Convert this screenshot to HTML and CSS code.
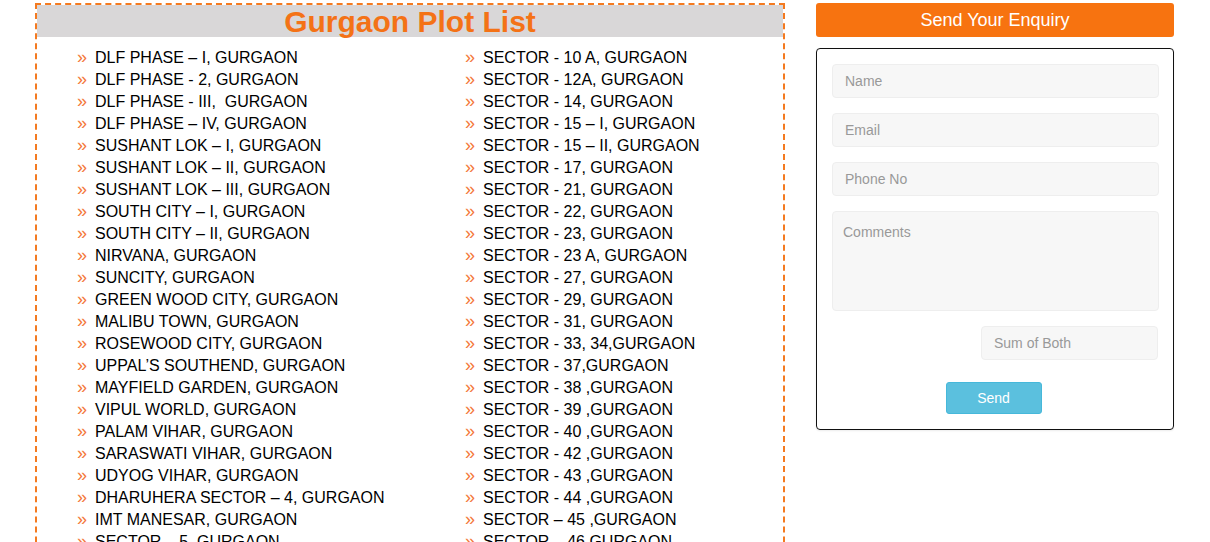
FILE: index.html
```html
<!DOCTYPE html>
<html lang="en">
<head>
<meta charset="utf-8">
<title>Gurgaon Plot List</title>
<link rel="stylesheet" href="styles.css">
</head>
<body>
<div class="container">
  <div class="main">
    <div class="plot-box">
      <h2 class="plot-title">Gurgaon Plot List</h2>
      <div class="plot-cols">
        <ul class="plot-list">
          <li>DLF PHASE – I, GURGAON</li>
          <li>DLF PHASE - 2, GURGAON</li>
          <li>DLF PHASE - III, &nbsp;GURGAON</li>
          <li>DLF PHASE – IV, GURGAON</li>
          <li>SUSHANT LOK – I, GURGAON</li>
          <li>SUSHANT LOK – II, GURGAON</li>
          <li>SUSHANT LOK – III, GURGAON</li>
          <li>SOUTH CITY – I, GURGAON</li>
          <li>SOUTH CITY – II, GURGAON</li>
          <li>NIRVANA, GURGAON</li>
          <li>SUNCITY, GURGAON</li>
          <li>GREEN WOOD CITY, GURGAON</li>
          <li>MALIBU TOWN, GURGAON</li>
          <li>ROSEWOOD CITY, GURGAON</li>
          <li>UPPAL’S SOUTHEND, GURGAON</li>
          <li>MAYFIELD GARDEN, GURGAON</li>
          <li>VIPUL WORLD, GURGAON</li>
          <li>PALAM VIHAR, GURGAON</li>
          <li>SARASWATI VIHAR, GURGAON</li>
          <li>UDYOG VIHAR, GURGAON</li>
          <li>DHARUHERA SECTOR – 4, GURGAON</li>
          <li>IMT MANESAR, GURGAON</li>
          <li>SECTOR – 5, GURGAON</li>
        </ul>
        <ul class="plot-list">
          <li>SECTOR - 10 A, GURGAON</li>
          <li>SECTOR - 12A, GURGAON</li>
          <li>SECTOR - 14, GURGAON</li>
          <li>SECTOR - 15 – I, GURGAON</li>
          <li>SECTOR - 15 – II, GURGAON</li>
          <li>SECTOR - 17, GURGAON</li>
          <li>SECTOR - 21, GURGAON</li>
          <li>SECTOR - 22, GURGAON</li>
          <li>SECTOR - 23, GURGAON</li>
          <li>SECTOR - 23 A, GURGAON</li>
          <li>SECTOR - 27, GURGAON</li>
          <li>SECTOR - 29, GURGAON</li>
          <li>SECTOR - 31, GURGAON</li>
          <li>SECTOR - 33, 34,GURGAON</li>
          <li>SECTOR - 37,GURGAON</li>
          <li>SECTOR - 38 ,GURGAON</li>
          <li>SECTOR - 39 ,GURGAON</li>
          <li>SECTOR - 40 ,GURGAON</li>
          <li>SECTOR - 42 ,GURGAON</li>
          <li>SECTOR - 43 ,GURGAON</li>
          <li>SECTOR - 44 ,GURGAON</li>
          <li>SECTOR – 45 ,GURGAON</li>
          <li>SECTOR – 46,GURGAON</li>
        </ul>
      </div>
    </div>
  </div>
  <aside class="side">
    <div class="enquiry-head">Send Your Enquiry</div>
    <form class="enquiry-form">
      <input class="field" type="text" placeholder="Name">
      <input class="field" type="text" placeholder="Email">
      <input class="field" type="text" placeholder="Phone No">
      <textarea class="field area" placeholder="Comments"></textarea>
      <div class="sum-row">
        <input class="field sum" type="text" placeholder="Sum of Both">
      </div>
      <div class="btn-row">
        <button class="send-btn" type="button">Send</button>
      </div>
    </form>
  </aside>
</div>
</body>
</html>
```

FILE: styles.css
```css
html, body {
  margin: 0;
  padding: 0;
  overflow: hidden;
  background: #fff;
}
body {
  font-family: "Liberation Sans", Arial, sans-serif;
  color: #000;
}
.container {
  display: flex;
  width: 1170px;
  margin-left: 20px;
}
.main {
  width: 780px;
  padding: 3px 0 0 15px;
  box-sizing: border-box;
}
.plot-box {
  border: 2px dashed #f47a20;
  border-bottom: none;
  width: 750px;
  box-sizing: border-box;
  height: 600px;
}
.plot-title {
  margin: 0;
  background: #d9d7d8;
  color: #f47216;
  font-size: 30px;
  font-weight: bold;
  text-align: center;
  height: 32px;
  line-height: 33px;
}
.plot-cols {
  display: grid;
  grid-template-columns: 388px 1fr;
  padding-top: 10px;
}
.plot-list {
  list-style: none;
  margin: 0;
  padding: 0 0 0 40px;
}
.plot-list li {
  font-size: 16px;
  line-height: 22px;
  height: 22px;
  white-space: nowrap;
  display: flex;
  align-items: center;
}
.plot-list li::before {
  content: "»";
  color: #f4793a;
  width: 18px;
  flex: none;
  font-size: 18px;
  line-height: 22px;
  position: relative;
  top: -1px;
}
.side {
  width: 390px;
  padding: 3px 16px 0 16px;
  box-sizing: border-box;
}
.enquiry-head {
  background: #f77310;
  color: #fff;
  font-size: 18px;
  text-align: center;
  height: 34px;
  line-height: 34px;
  border-radius: 3px;
}
.enquiry-form {
  margin-top: 11px;
  border: 1px solid #111;
  border-radius: 4px;
  padding: 15px 14px 15px 15px;
  display: flex;
  flex-direction: column;
  box-shadow: 0 1px 2px rgba(0,0,0,0.08);
}
.field {
  font-family: "Liberation Sans", Arial, sans-serif;
  font-size: 14px;
  color: #555;
  background: #f7f7f7;
  border: 1px solid #eeeeee;
  border-radius: 4px;
  height: 34px;
  box-sizing: border-box;
  padding: 6px 12px;
  margin: 0 0 15px 0;
  outline: none;
}
.field::placeholder {
  color: #999;
}
.area {
  height: 100px;
  resize: none;
  padding: 12px 10px;
}
.sum-row {
  display: flex;
  justify-content: flex-end;
  padding-right: 1px;
}
.sum {
  width: 177px;
  margin-bottom: 22px;
}
.btn-row {
  display: flex;
  justify-content: center;
}
.send-btn {
  width: 96px;
  height: 32px;
  background: #5bc0de;
  border: 1px solid #46b8da;
  border-radius: 3px;
  color: #fff;
  font-family: "Liberation Sans", Arial, sans-serif;
  font-size: 14px;
  margin-right: 4px;
}
```
